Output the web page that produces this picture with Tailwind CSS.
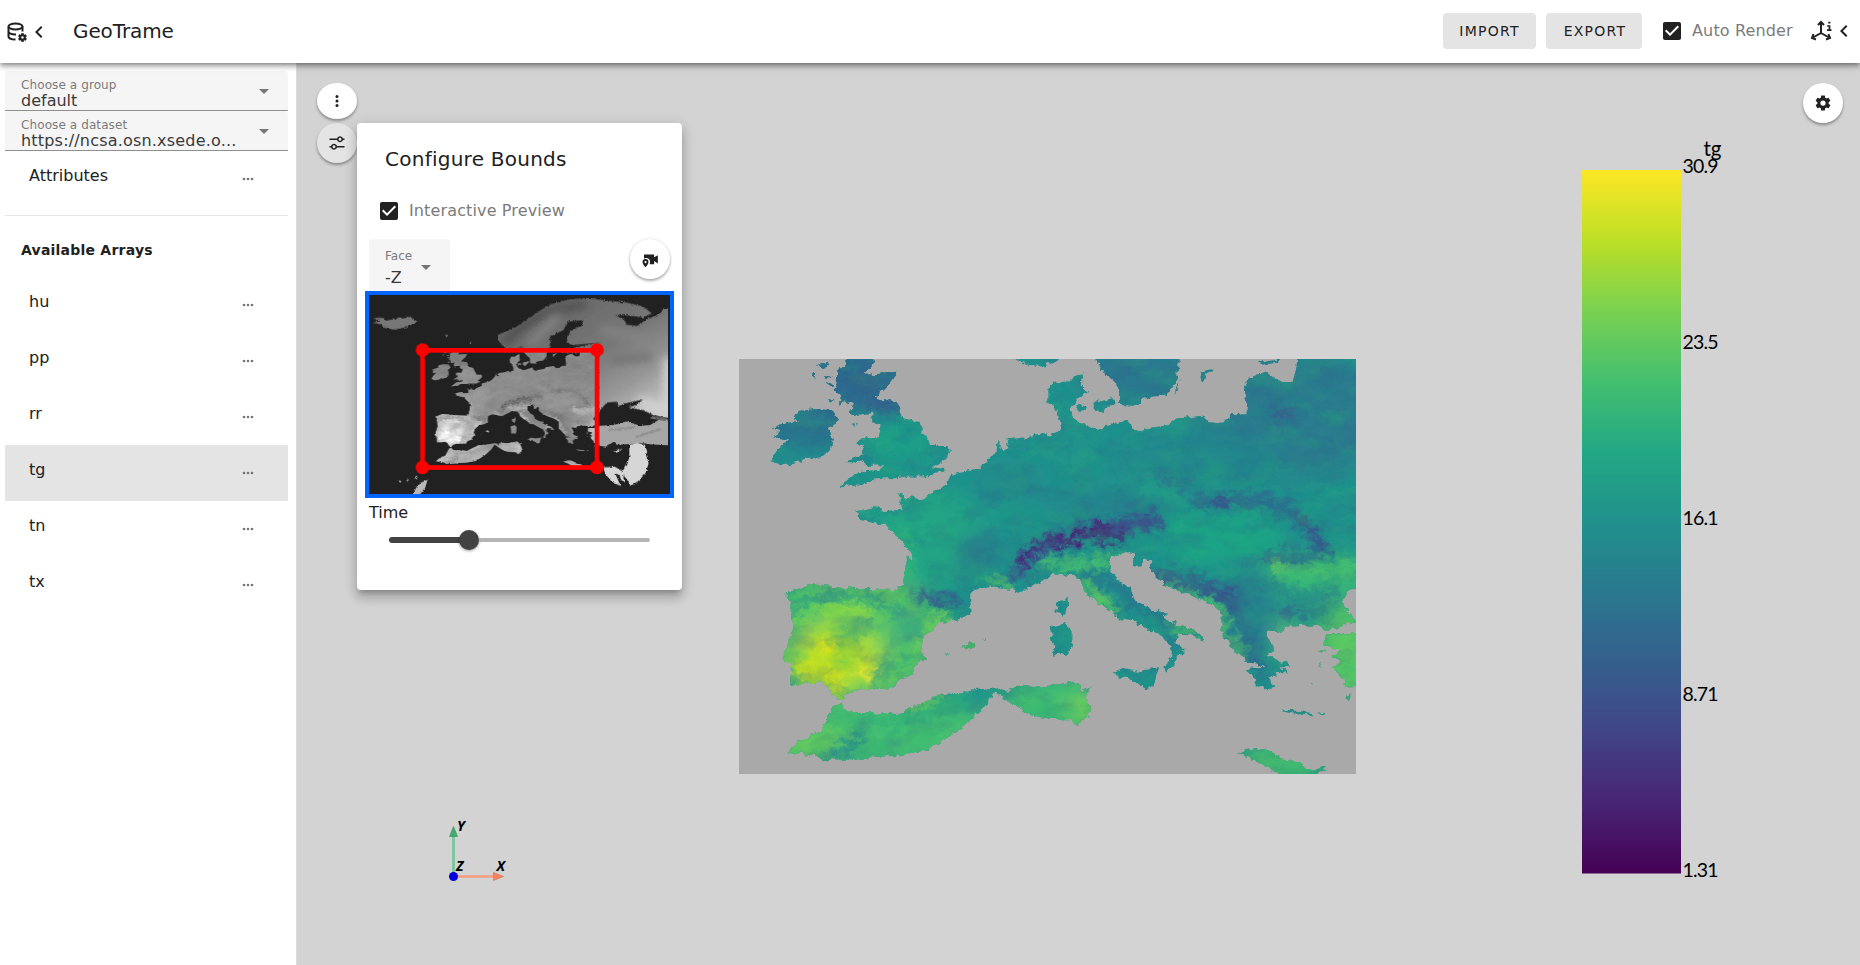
<!DOCTYPE html>
<html lang="en">
<head>
<meta charset="utf-8">
<title>GeoTrame</title>
<script src="https://cdn.jsdelivr.net/npm/@tailwindcss/browser@4"></script>
</head>
<body class="h-[965px] w-[1860px] overflow-hidden bg-white fill-[#212121] font-['DejaVu_Sans',sans-serif] text-[#212121]">
<svg class="absolute size-0" aria-hidden="true">
  <defs>
    <symbol id="cog" viewBox="0 0 24 24"><path d="M12,15.5A3.5,3.5 0 0,1 8.5,12A3.5,3.5 0 0,1 12,8.5A3.5,3.5 0 0,1 15.5,12A3.5,3.5 0 0,1 12,15.5M19.43,12.97C19.47,12.65 19.5,12.33 19.5,12C19.5,11.67 19.47,11.34 19.43,11L21.54,9.37C21.73,9.22 21.78,8.95 21.66,8.73L19.66,5.27C19.54,5.05 19.27,4.96 19.05,5.05L16.56,6.05C16.04,5.66 15.5,5.32 14.87,5.07L14.5,2.42C14.46,2.18 14.25,2 14,2H10C9.75,2 9.54,2.18 9.5,2.42L9.13,5.07C8.5,5.32 7.96,5.66 7.44,6.05L4.95,5.05C4.73,4.96 4.46,5.05 4.34,5.27L2.34,8.73C2.21,8.95 2.27,9.22 2.46,9.37L4.57,11C4.53,11.34 4.5,11.67 4.5,12C4.5,12.33 4.53,12.65 4.57,12.97L2.46,14.63C2.27,14.78 2.21,15.05 2.34,15.27L4.34,18.73C4.46,18.95 4.73,19.03 4.95,18.95L7.44,17.94C7.96,18.34 8.5,18.68 9.13,18.93L9.5,21.58C9.54,21.82 9.75,22 10,22H14C14.25,22 14.46,21.82 14.5,21.58L14.87,18.93C15.5,18.67 16.04,18.34 16.56,17.94L19.05,18.95C19.27,19.03 19.54,18.95 19.66,18.73L21.66,15.27C21.78,15.05 21.73,14.78 21.54,14.63L19.43,12.97Z"/></symbol>
    <symbol id="chev" viewBox="0 0 24 24"><path d="M15.41,16.58L10.83,12L15.41,7.41L14,6L8,12L14,18L15.41,16.58Z"/></symbol>
    <symbol id="check" viewBox="0 0 24 24"><path d="M10,17L5,12L6.41,10.58L10,14.17L17.59,6.58L19,8M19,3H5C3.89,3 3,3.89 3,5V19A2,2 0 0,0 5,21H19A2,2 0 0,0 21,19V5C21,3.89 20.1,3 19,3Z"/></symbol>
    <symbol id="down" viewBox="0 0 24 24"><path d="M7,10L12,15L17,10H7Z"/></symbol>
    <symbol id="dots" viewBox="0 0 12 4"><circle cx="2" cy="2" r="1.3"/><circle cx="6" cy="2" r="1.3"/><circle cx="10" cy="2" r="1.3"/></symbol>

    <filter id="rough" x="0" y="0" width="1905" height="1300" filterUnits="userSpaceOnUse">
      <feTurbulence type="fractalNoise" baseFrequency="0.05" numOctaves="3" seed="4"/>
      <feDisplacementMap in="SourceGraphic" scale="22" xChannelSelector="R" yChannelSelector="G"/>
    </filter>
    <filter id="b6" x="-50%" y="-50%" width="200%" height="200%"><feGaussianBlur stdDeviation="6"/></filter>
    <filter id="b12" x="-50%" y="-50%" width="200%" height="200%"><feGaussianBlur stdDeviation="13"/></filter>
    <filter id="b30" x="-80%" y="-80%" width="260%" height="260%"><feGaussianBlur stdDeviation="32"/></filter>
    <filter id="darkNoise" x="0" y="0" width="1905" height="1300" filterUnits="userSpaceOnUse" color-interpolation-filters="sRGB">
      <feTurbulence type="fractalNoise" baseFrequency="0.012 0.02" numOctaves="5" seed="11"/>
      <feColorMatrix values="0 0 0 0 .18  0 0 0 0 .36  0 0 0 0 .55  2.6 0 0 0 -1.15"/>
    </filter>
    <filter id="lightNoise" x="0" y="0" width="1905" height="1300" filterUnits="userSpaceOnUse" color-interpolation-filters="sRGB">
      <feTurbulence type="fractalNoise" baseFrequency="0.01 0.017" numOctaves="4" seed="27"/>
      <feColorMatrix values="0 0 0 0 .16  0 0 0 0 .70  0 0 0 0 .46  2.4 0 0 0 -1.1"/>
    </filter>
    <!-- fine relief that breaks up the mountain ranges -->
    <filter id="relief" x="0" y="0" width="1905" height="1300" filterUnits="userSpaceOnUse" color-interpolation-filters="sRGB">
      <feTurbulence type="fractalNoise" baseFrequency="0.035 0.05" numOctaves="3" seed="9" result="n"/>
      <feDisplacementMap in="SourceGraphic" in2="n" scale="70" xChannelSelector="R" yChannelSelector="G"/>
    </filter>
    <filter id="gray" x="0" y="0" width="1905" height="1300" filterUnits="userSpaceOnUse" color-interpolation-filters="sRGB">
      <feColorMatrix values=".38 .55 0 0 .2  .38 .55 0 0 .2  .38 .55 0 0 .2  0 0 0 1 0"/>
    </filter>
    <filter id="roughMini" x="0" y="0" width="1020" height="700" filterUnits="userSpaceOnUse">
      <feTurbulence type="fractalNoise" baseFrequency="0.12" numOctaves="3" seed="4"/>
      <feDisplacementMap in="SourceGraphic" scale="9" xChannelSelector="R" yChannelSelector="G"/>
    </filter>
    <linearGradient id="north" gradientUnits="userSpaceOnUse" x1="640" y1="60" x2="860" y2="420">
      <stop offset="0" stop-color="#686868"/><stop offset=".45" stop-color="#787878"/><stop offset=".75" stop-color="#989898"/><stop offset="1" stop-color="#c4c4c4"/>
    </linearGradient>
    <clipPath id="dataEdge"><path d="M57,45H954V642H57Z"/></clipPath>
    <clipPath id="northLand"><path id="northShape" d="M745,215L745,400 755,385 770,368 800,365 805,378 825,370 880,358 860,375 835,382 880,390 910,405 955,414H980V85L940,85 930,102 890,118 860,138 830,134 822,118 795,105 830,106 880,112 905,100 880,80 830,68 770,62 720,55 660,58 600,74 560,98 500,140 443,165 443,180 465,205 500,208 515,198 521,220H590L600,200 600,170 640,150 655,125 700,120 695,135 660,155 650,185 665,195 755,188 690,200 650,207 630,218Z"/></clipPath>

    <clipPath id="land">
      <!-- continent -->
      <path d="M1900,10V714H1878L1855,720 1850,735 1835,755 1855,775 1860,795 1878,812H1900V818H1878L1850,820 1825,838 1775,840 1765,827 1710,827 1665,833 1655,852 1630,842 1615,845 1610,860 1625,880 1630,900 1612,915 1630,925 1670,940 1678,955 1650,950 1675,968 1635,965 1640,980 1615,980 1630,1015 1610,1018 1595,1005 1575,1012 1570,980 1548,962 1570,950 1606,948 1580,940 1545,938 1540,920 1520,905 1500,880 1475,858 1475,785 1440,762 1400,742 1360,730 1310,705 1263,668 1263,637 1240,628 1230,650 1213,645 1205,622 1215,608 1192,603 1170,612 1140,625 1140,655 1170,698 1205,715 1220,755 1265,780 1315,788 1300,800 1330,818 1390,838 1420,865 1415,877 1390,855 1350,850 1335,880 1360,898 1360,915 1338,920 1330,945 1308,963 1298,952 1320,930 1326,905 1315,880 1300,862 1265,845 1205,810 1165,805 1140,780 1100,755 1065,730 1050,690 1020,675 975,670 945,690 900,710 870,727 820,715 770,706 725,725 720,745 725,785 690,808 630,820 580,865 570,900 588,928 560,945 545,975 505,990 490,1015 390,1018 350,1030 335,1048 305,1035 295,1010 270,996 230,1003 180,1002 187,940 168,938 155,925 170,895 190,835 182,750 163,732 205,715 235,702 330,710 410,718 500,720 520,705 530,650 530,620 552,628 530,585 490,550 465,525 388,510 385,490 370,485 440,470 460,483 515,480 515,445 500,432 525,440 580,448 600,428 655,405 660,375 700,367 755,350 800,300 802,275 820,303 838,295 832,268 900,260 910,268 915,250 950,250 955,262 992,240 990,210 975,170 955,160 955,118 968,95 1010,95 1035,75 1058,70 1055,115 1075,125 1045,145 1018,182 1040,210 1095,238 1195,210 1205,235 1230,247 1250,235 1315,225 1350,205 1420,197 1440,218 1475,218 1510,193 1550,190 1552,150 1542,110 1565,78 1610,65 1650,95 1690,92 1700,50 1702,10Z"/>
      <!-- southern Sweden, Norway, Danish isles, Gotland -->
      <path d="M1098,10L1102,40 1125,70 1170,110 1170,165 1230,168 1230,148 1310,133 1340,90 1348,10ZM835,10L868,36 905,47 940,46 985,30 1000,10ZM1034,166L1070,165 1076,184 1040,178ZM1094,155L1148,142 1155,160 1128,178 1122,192 1094,182ZM1410,72L1450,54 1415,98ZM1356,90L1334,132 1340,112ZM1584,38L1665,20 1640,38 1590,44Z"/>
      <!-- Great Britain -->
      <path d="M350,10L440,30 398,75 500,68 480,100 435,143 500,155 512,185 520,205 565,215 580,245 595,270 600,285 655,285 660,308 635,335 610,352 645,357 630,368 600,378 525,380 490,385 430,385 405,402 360,405 342,412 330,410 375,375 405,363 445,360 460,345 420,348 395,335 352,337 400,310 398,288 378,283 388,265 445,265 455,225 430,220 425,205 430,188 370,195 358,185 372,160 345,145 330,165 332,140 310,120 320,100 322,62 345,45Z"/>
      <!-- Ireland, Hebrides -->
      <path d="M190,203L210,183 250,178 305,180 325,210 295,235 305,265 300,300 285,315 220,330 165,345 120,335 132,315 150,290 175,268 132,262 150,240 128,233 150,224 205,212ZM265,45L298,32 290,48 272,58ZM246,68L256,70 252,86ZM280,74L308,82 300,88ZM290,96L312,104 300,112ZM292,152L316,148 304,158ZM330,140L365,150 350,166ZM372,222L380,218 378,228Z"/>
      <!-- Corsica, Sardinia, Sicily, Balearics -->
      <path d="M1012,735L1014,765 1008,790 995,800 980,785 977,758 1000,752ZM960,835L985,828 1005,820 1025,840 1023,890 1015,912 985,908 970,915 968,870ZM1155,965L1180,955 1230,963 1288,952 1275,985 1270,1015 1250,1015 1215,995 1158,975ZM697,888L718,876 737,890 722,900ZM758,870L768,868 766,873ZM645,914L653,914 649,920Z"/>
      <!-- North Africa -->
      <path d="M172,1205L205,1175 270,1145 310,1070 335,1060 345,1080 370,1090 440,1088 500,1095 560,1065 620,1035 700,1025 795,1012 830,1022 875,1008 930,1012 1030,995 1050,1008 1052,1022 1085,1008 1065,1028 1085,1080 1075,1100 1040,1130 1020,1108 960,1106 900,1095 850,1065 793,1026 760,1075 700,1130 650,1165 590,1200 500,1217 420,1222 345,1230 280,1232 260,1217ZM1520,1210L1545,1202 1570,1195 1600,1195 1632,1210 1650,1228 1710,1238 1728,1255 1785,1260 1740,1285H1670L1610,1250 1565,1225ZM1730,1262L1785,1252 1750,1290H1700Z"/>
      <!-- Anatolia, Crete, Aegean -->
      <path d="M1900,850H1785L1780,885 1808,893 1830,897 1805,920 1830,935 1810,950 1825,975 1845,990 1840,1000 1875,1015H1900ZM1656,1078L1720,1085 1750,1090 1745,1096 1710,1094 1658,1084ZM1762,1092L1780,1088 1775,1094ZM1848,1040L1865,1034 1852,1050ZM1765,900L1788,903 1775,910ZM1768,938L1775,940 1770,950ZM1740,1000L1745,1000 1743,1008Z"/>
    </clipPath>

    <g id="terrain" filter="url(#rough)">
      <g clip-path="url(#land)">
        <rect width="1905" height="1300" fill="#20928c"/>
        <!-- broad temperature zones -->
        <g filter="url(#b30)">
          <ellipse cx="400" cy="80" rx="200" ry="110" fill="#2e6a8e"/>
          <ellipse cx="240" cy="230" rx="130" ry="70" fill="#2b708e"/>
          <ellipse cx="200" cy="320" rx="100" ry="40" fill="#238a8d"/>
          <ellipse cx="520" cy="280" rx="90" ry="70" fill="#1fa088"/>
          <ellipse cx="1220" cy="70" rx="180" ry="90" fill="#2a788e"/>
          <ellipse cx="1690" cy="190" rx="300" ry="190" fill="#297b8e"/>
          <ellipse cx="1400" cy="330" rx="260" ry="80" fill="#23888d"/>
          <ellipse cx="600" cy="570" rx="180" ry="140" fill="#22a585"/>
          <ellipse cx="1480" cy="560" rx="190" ry="90" fill="#1fa386"/>
          <ellipse cx="1270" cy="400" rx="80" ry="25" fill="#24a884"/>
          <ellipse cx="1120" cy="470" rx="160" ry="40" fill="#26808e"/>
          <ellipse cx="840" cy="400" rx="90" ry="40" fill="#25858d"/>
          <ellipse cx="740" cy="610" rx="60" ry="55" fill="#2b758e"/>
          <ellipse cx="1760" cy="680" rx="200" ry="65" fill="#38b977"/>
          <ellipse cx="370" cy="860" rx="260" ry="200" fill="#5ec962"/>
          <ellipse cx="320" cy="920" rx="130" ry="100" fill="#b5de2b"/>
          <ellipse cx="540" cy="840" rx="60" ry="40" fill="#2aa186"/>
          <ellipse cx="720" cy="890" rx="100" ry="35" fill="#6ccd5a"/>
          <ellipse cx="500" cy="1150" rx="400" ry="90" fill="#44bf70"/>
          <ellipse cx="240" cy="1180" rx="120" ry="60" fill="#65cb5e"/>
          <ellipse cx="990" cy="1060" rx="190" ry="80" fill="#42be71"/>
          <ellipse cx="1060" cy="1085" rx="50" ry="50" fill="#73d056"/>
          <ellipse cx="1850" cy="930" rx="100" ry="110" fill="#5ac864"/>
          <ellipse cx="1650" cy="1240" rx="150" ry="50" fill="#4ec36b"/>
          <ellipse cx="1640" cy="850" rx="60" ry="60" fill="#58c765"/>
          <ellipse cx="1560" cy="800" rx="90" ry="160" fill="#277f8e"/>
          <ellipse cx="1840" cy="810" rx="80" ry="45" fill="#5ac864"/>
        </g>
        <g filter="url(#relief)">
        <!-- warm lowlands -->
        <g filter="url(#b12)" fill="none" stroke-linecap="round" stroke-linejoin="round">
          <path d="M950,640L1000,650 1100,640 1160,630" stroke="#46c06f" stroke-width="38"/>
          <path d="M1065,700L1150,780" stroke="#5ec962" stroke-width="34"/>
          <path d="M1310,820L1400,855" stroke="#5ec962" stroke-width="24"/>
          <path d="M1270,670L1470,780 1480,850 1545,920" stroke="#60ca60" stroke-width="20"/>
          <path d="M780,690L830,700" stroke="#65cb5e" stroke-width="22"/>
          <path d="M590,810L650,790 560,900" stroke="#6ccd5a" stroke-width="24"/>
          <path d="M300,780L400,790" stroke="#86d549" stroke-width="50"/>
          <path d="M520,550L535,690" stroke="#35b779" stroke-width="26"/>
          <path d="M1640,650L1860,660" stroke="#44bf70" stroke-width="50"/>
          <path d="M390,465L410,500" stroke="#35b779" stroke-width="20"/>
          <ellipse cx="410" cy="965" rx="34" ry="14" fill="#fde725"/>
          <ellipse cx="295" cy="895" rx="30" ry="18" fill="#e2e418"/>
          <ellipse cx="240" cy="955" rx="45" ry="30" fill="#c2df23"/>
          <ellipse cx="310" cy="990" rx="30" ry="40" fill="#cde11d"/>
          <path d="M540,1075L640,1045" stroke="#7ad151" stroke-width="24"/>
          <ellipse cx="1642" cy="640" rx="20" ry="14" fill="#8fd744"/>
        </g>
        <!-- mountain ranges -->
        <g filter="url(#b12)" fill="none" stroke-linecap="round" stroke-linejoin="round">
          <path d="M870,670L890,620 940,585 1050,550 1170,530 1280,515" stroke="#3d4d8a" stroke-width="44"/>
          <path d="M1400,455L1500,450 1600,450 1690,490 1760,560 1785,605 1740,620 1620,625" stroke="#2f6c8e" stroke-width="38"/>
          <path d="M1280,670L1400,700 1500,730 1530,800" stroke="#355f8d" stroke-width="38"/>
          <path d="M550,735L690,755" stroke="#31688e" stroke-width="24"/>
          <path d="M1060,675L1150,695 1190,745 1290,800 1330,890" stroke="#287c8e" stroke-width="30"/>
          <path d="M1660,790L1780,785" stroke="#33638d" stroke-width="22"/>
          <path d="M1530,800L1570,900 1600,980" stroke="#2f6b8e" stroke-width="26"/>
          <path d="M1620,700L1720,740 1820,735" stroke="#287d8e" stroke-width="16"/>
          <path d="M190,790L240,740 400,735 510,790" stroke="#27978a" stroke-width="20"/>
          <path d="M320,865L430,820" stroke="#26a086" stroke-width="12"/>
          <path d="M430,1005L470,950 550,920" stroke="#28a483" stroke-width="14"/>
          <path d="M300,1225L350,1190 400,1160" stroke="#21908d" stroke-width="26"/>
          <path d="M390,1100L500,1130 700,1040" stroke="#2fb07c" stroke-width="22"/>
          <path d="M380,100L450,95M420,160L510,175" stroke="#3a538b" stroke-width="20"/>
          <path d="M1640,195L1690,192" stroke="#3a568c" stroke-width="22"/>
          <path d="M1180,455L1250,480M1270,380L1380,410" stroke="#30698e" stroke-width="16"/>
          <path d="M1000,755V780M1010,850V880" stroke="#21918c" stroke-width="20"/>
          <path d="M1180,975L1265,970" stroke="#25858e" stroke-width="20"/>
        </g>
        <!-- highest ridges -->
        <g filter="url(#b6)" fill="none" stroke="#482475" stroke-linecap="round" stroke-linejoin="round">
          <path d="M880,655L895,625M900,605L950,570 1000,565 1050,575M980,588L1070,550 1190,550M1030,555L1130,525M1100,580L1180,565" stroke-width="13"/>
          <path d="M1440,455L1500,455M1700,500L1760,560 1780,600M1430,725L1500,735" stroke="#3c4f8a" stroke-width="12"/>
          <path d="M580,745L680,758" stroke="#3a548c" stroke-width="9"/>
        </g>
        </g>
        <rect width="1905" height="1300" filter="url(#darkNoise)" opacity=".24"/>
        <rect width="1905" height="1300" filter="url(#lightNoise)" opacity=".32"/>
      </g>
    </g>
  </defs>
</svg>

<div class="flex h-full flex-col">
  <header class="z-20 flex h-[63px] shrink-0 items-center bg-white pb-[10px] pl-[5px] shadow-[0_2px_4px_-1px_rgba(0,0,0,.3),0_4px_5px_0_rgba(0,0,0,.2),0_1px_10px_0_rgba(0,0,0,.14)]">
    <svg class="mt-[11px] size-6" viewBox="0 0 24 24" fill="none" stroke="#212121" stroke-width="2">
      <ellipse cx="10.5" cy="6.500" rx="7" ry="3"/><path d="M3.500,6.500V16.500C3.500,18 6,19.500 10.500,19.500M17.500,6.500V11.500M3.500,11.500C3.500,13 6,14.500 11,14.400"/>
      <use href="#cog" x="12.500" y="12.500" width="10" height="10" fill="#212121" stroke="#212121" stroke-width="1.200"/>
    </svg>
    <svg class="-ml-[2px] mt-[10px] size-6"><use href="#chev"/></svg>
    <h1 class="ml-[22px] mt-[9px] text-xl tracking-[-.1px]">GeoTrame</h1>
    <div class="ml-auto flex items-center pt-[9px]">
      <button class="h-9 w-[93px] rounded bg-[#e4e4e4] text-sm tracking-[1.25px]">IMPORT</button>
      <button class="ml-[10px] h-9 w-24 rounded bg-[#e4e4e4] pl-[2px] text-sm tracking-[1.25px]">EXPORT</button>
      <svg class="ml-[18px] size-6"><use href="#check"/></svg>
      <span class="ml-2 w-[116px] text-base tracking-[.15px] text-[#7b7b7b]">Auto Render</span>
      <svg class="ml-px size-6" viewBox="0 0 24 24" fill="none" stroke="#212121" stroke-width="2">
        <path d="M12,4V14L4,18.500M12,14L20,18.500M9,6L12,3 15,6M4.500,15L3,19 7,20.500M19.500,15L21,19 17,20.500"/>
        <path d="M18.200,7H20.500V11M18,11.200H22.500M19.200,3.700H21.400" stroke-width="1.700"/>
      </svg>
      <svg class="-ml-px mr-[4px] size-6"><use href="#chev"/></svg>
    </div>
  </header>

  <div class="flex min-h-0 flex-1">
    <aside class="w-[297px] shrink-0 border-r border-[#dcdcdc] bg-white pl-[5px] pr-2 pt-2">
      <div class="flex h-10 items-center justify-between rounded-t border-b border-[#8f8f8f] bg-[#f5f5f5] pl-4 pr-3">
        <div class="pt-[4px]"><div class="h-[15px] text-xs leading-[16px] tracking-[.1px] text-[#7b7b7b]">Choose a group</div><div class="text-base leading-[17px] text-[#3a3a3a]">default</div></div>
        <svg class="size-6 fill-[#757575]"><use href="#down"/></svg>
      </div>
      <div class="flex h-10 items-center justify-between rounded-t border-b border-[#8f8f8f] bg-[#f5f5f5] pl-4 pr-3">
        <div class="pt-[4px]"><div class="h-[15px] text-xs leading-[16px] tracking-[.1px] text-[#7b7b7b]">Choose a dataset</div><div class="text-base leading-[17px] tracking-[.19px] text-[#3a3a3a]">https://ncsa.osn.xsede.o...</div></div>
        <svg class="size-6 fill-[#757575]"><use href="#down"/></svg>
      </div>
      <div class="flex h-14 items-center justify-between pl-6 pr-[34px]"><span class="mb-[7px]">Attributes</span><svg class="h-1 w-3 fill-[#757575]"><use href="#dots"/></svg></div>
      <div class="mt-2 h-px bg-[#e8e8e8]"></div>
      <div class="flex h-[61px] items-center pl-4 pt-[7px] text-sm font-bold tracking-[.22px]">Available Arrays</div>
      <div class="flex h-14 items-center justify-between pl-6 pr-[34px]"><span class="mb-[7px]">hu</span><svg class="h-1 w-3 fill-[#757575]"><use href="#dots"/></svg></div>
      <div class="flex h-14 items-center justify-between pl-6 pr-[34px]"><span class="mb-[7px]">pp</span><svg class="h-1 w-3 fill-[#757575]"><use href="#dots"/></svg></div>
      <div class="flex h-14 items-center justify-between pl-6 pr-[34px]"><span class="mb-[7px]">rr</span><svg class="h-1 w-3 fill-[#757575]"><use href="#dots"/></svg></div>
      <div class="flex h-14 items-center justify-between bg-[#e4e4e4] pl-6 pr-[34px]"><span class="mb-[7px]">tg</span><svg class="h-1 w-3 fill-[#757575]"><use href="#dots"/></svg></div>
      <div class="flex h-14 items-center justify-between pl-6 pr-[34px]"><span class="mb-[7px]">tn</span><svg class="h-1 w-3 fill-[#757575]"><use href="#dots"/></svg></div>
      <div class="flex h-14 items-center justify-between pl-6 pr-[34px]"><span class="mb-[7px]">tx</span><svg class="h-1 w-3 fill-[#757575]"><use href="#dots"/></svg></div>
    </aside>

    <main class="relative flex-1 bg-[#d3d3d3]">
      <!-- map view; origin of the view is (297, 63) -->
      <svg class="absolute left-[442px] top-[296px]" width="617" height="415" viewBox="27 27 1851 1245">
        <rect x="27" y="27" width="1851" height="1245" fill="#a9a9a9"/>
        <use href="#terrain"/>
      </svg>

      <!-- orientation axes -->
      <svg class="absolute left-[143px] top-[747px]" width="90" height="80" viewBox="440 810 90 80">
        <path d="M453.500,876V836" stroke="#6cc796" stroke-width="2.600"/>
        <path d="M453.500,826.500L457.500,836.500H449.500Z" fill="#3fae70" stroke="#36895b" stroke-width=".6"/>
        <path d="M454,876.500H494" stroke="#f49d7d" stroke-width="2.600"/>
        <path d="M503.500,876.500L493.500,872.500V880.500Z" fill="#fb825f" stroke="#c96e52" stroke-width=".6"/>
        <circle cx="453.500" cy="876.500" r="4.500" fill="#0000dc"/>
        <g class="font-['Open_Sans',sans-serif] font-bold italic" font-size="14" fill="#000">
          <text x="457" y="831">Y</text><text x="456" y="871">Z</text><text x="496.500" y="871">X</text>
        </g>
      </svg>

      <!-- scalar bar -->
      <svg class="absolute left-[1275px] top-[72px]" width="180" height="760" viewBox="1572 135 180 760">
        <defs><linearGradient id="viridis" x1="0" y1="0" x2="0" y2="1">
          <stop offset="0" stop-color="#fde725"/><stop offset=".1" stop-color="#bddf26"/><stop offset=".2" stop-color="#7ad151"/><stop offset=".3" stop-color="#44bf70"/><stop offset=".4" stop-color="#22a884"/><stop offset=".5" stop-color="#21918c"/><stop offset=".6" stop-color="#2a788e"/><stop offset=".7" stop-color="#355f8d"/><stop offset=".8" stop-color="#414487"/><stop offset=".9" stop-color="#482475"/><stop offset="1" stop-color="#440154"/>
        </linearGradient></defs>
        <rect x="1582" y="170" width="99" height="703.500" fill="url(#viridis)"/>
        <g class="font-[Lato,sans-serif] tabular-nums [font-kerning:none]" font-size="19.500" fill="#000">
          <text x="1703.500" y="156" font-size="20.500" textLength="18">tg</text>
          <text x="1682.500" y="173" textLength="36">30.9</text>
          <text x="1682.500" y="349" textLength="36">23.5</text>
          <text x="1682.500" y="525" textLength="36">16.1</text>
          <text x="1682.500" y="701" textLength="36">8.71</text>
          <text x="1682.500" y="877" textLength="36">1.31</text>
        </g>
      </svg>

      <button class="absolute left-[20px] top-[20px] flex h-9 w-10 items-center justify-center rounded-[50%] bg-white shadow-[0_2px_3px_rgba(0,0,0,.35)]"><svg class="size-[18px]" viewBox="0 0 24 24"><circle cx="12" cy="6" r="2"/><circle cx="12" cy="12" r="2"/><circle cx="12" cy="18" r="2"/></svg></button>
      <button class="absolute left-[20px] top-[60px] flex size-10 items-center justify-center rounded-full bg-[#e4e4e4] shadow-[0_2px_3px_rgba(0,0,0,.35)]"><svg class="size-[18px]" viewBox="0 0 24 24"><path d="M8 13C6.140 13 4.590 14.280 4.140 16H2V18H4.140C4.590 19.720 6.140 21 8 21S11.410 19.720 11.860 18H22V16H11.860C11.410 14.280 9.860 13 8 13M8 19C6.900 19 6 18.100 6 17C6 15.900 6.900 15 8 15S10 15.900 10 17C10 18.100 9.100 19 8 19M19.860 6C19.410 4.280 17.860 3 16 3S12.590 4.280 12.140 6H2V8H12.140C12.590 9.720 14.140 11 16 11S19.410 9.720 19.860 8H22V6H19.860M16 9C14.900 9 14 8.100 14 7C14 5.900 14.900 5 16 5S18 5.900 18 7C18 8.100 17.100 9 16 9Z"/></svg></button>
      <button class="absolute right-[17px] top-[20px] flex size-10 items-center justify-center rounded-full bg-white shadow-[0_2px_3px_rgba(0,0,0,.35)]"><svg class="size-[18px]"><use href="#cog"/></svg></button>

      <!-- bounds panel -->
      <section class="absolute left-[60px] top-[60px] flex h-[467px] w-[325px] flex-col rounded bg-white px-2 shadow-[0_5px_5px_-3px_rgba(0,0,0,.2),0_8px_10px_1px_rgba(0,0,0,.14),0_3px_14px_2px_rgba(0,0,0,.12)]">
        <h2 class="mt-5 pl-5 text-xl leading-8 tracking-[.25px]">Configure Bounds</h2>
        <div class="mt-6 flex items-center pl-3"><svg class="size-6"><use href="#check"/></svg><span class="ml-2 text-base tracking-[.13px] text-[#7b7b7b]">Interactive Preview</span></div>
        <div class="mt-[16px] flex h-[52px] items-start justify-between pl-1 pr-1">
          <div class="flex h-[55px] w-[81px] items-start rounded-t bg-[#f5f5f5] pl-4">
            <div class="w-[29px] shrink-0 pt-[9px]"><div class="text-xs leading-[16px] text-[#7b7b7b]">Face</div><div class="mt-[2px] text-base leading-6 text-[#3a3a3a]">-Z</div></div>
            <svg class="mt-4 size-6 shrink-0 fill-[#757575]"><use href="#down"/></svg>
          </div>
          <button class="flex size-10 items-center justify-center rounded-full bg-white shadow-[0_2px_3px_rgba(0,0,0,.3),0_0_3px_rgba(0,0,0,.12)]"><svg class="size-[18px]" viewBox="0 0 24 24"><path fill-rule="evenodd" d="M4,6H17.500V9.800L22.500,7V18L17.500,14.800V19H11.500C12.300,17.300 12.300,14.500 11.200,12.800C9.500,10.400 5.800,10.200 4,11.500ZM6,12A4,4 0 0 0 2,16C2,19 6,23 6,23S10,19 10,16A4,4 0 0 0 6,12M6,14.500A1.500,1.500 0 1 1 6,17.500A1.500,1.500 0 1 1 6,14.500"/></svg></button>
        </div>
        <div class="relative h-[207px] w-[309px] shrink-0 border-4 border-[#0064ff] bg-[#212121]">
          <svg width="301" height="199" viewBox="57 45 903 597">
            <g clip-path="url(#dataEdge)">
            <g filter="url(#roughMini)">
              <g clip-path="url(#northLand)">
                <rect x="430" y="45" width="560" height="390" fill="url(#north)"/>
                <g filter="url(#b12)" fill="none" stroke-linecap="round">
                  <path d="M465,185L530,130 610,90 700,75" stroke="#4c4c4c" stroke-width="20"/>
                  <path d="M960,250V400L880,370" stroke="#d0d0d0" stroke-width="40"/>
                  <path d="M540,190L620,110M760,150L900,180" stroke="#868686" stroke-width="22"/>
                  <path d="M790,240L900,230" stroke="#6c6c6c" stroke-width="18"/>
                </g>
              </g>
              <path fill="#a6a6a6" d="M736,438L790,435 830,424 870,437 900,435 925,420 955,422H980V497L900,493 870,488 840,492 800,494 790,485 770,500 745,497 736,480Z"/>
              <path fill="none" stroke="#8a8a8a" stroke-width="8" stroke-linecap="round" opacity=".7" d="M780,450L850,442M860,470L930,448M905,412L955,420"/>
              <path fill="#d6d6d6" d="M838,493L862,488 884,494 892,515 888,525 896,550 886,580 865,603 842,618 832,600 822,588 830,560 838,530ZM760,562L795,560 818,575 826,555 833,560 820,590 824,608 814,600 806,582 796,582 812,618 785,605 766,582ZM790,513L818,507 800,518Z"/>
              <path fill="#777" d="M66,128L92,124 70,114 100,114 108,122 130,118 150,112 160,116 180,110 203,125 170,141 135,149 100,143 95,133Z"/>
              <path fill="#b8b8b8" d="M187,645L205,612 233,598 225,625 208,645ZM145,600L155,604 150,608ZM195,592L203,590 200,598ZM168,600L178,598 174,604Z"/>
              <path fill="#777" d="M285,165L295,165 290,172ZM358,188L365,184 362,194Z"/>
            </g>
            </g>
            <svg x="217" y="211" width="524" height="352" viewBox="27 27 1851 1245" preserveAspectRatio="none"><g filter="url(#gray)"><use href="#terrain"/></g></svg>
            <rect x="217.500" y="211" width="523.500" height="351.500" fill="none" stroke="#f00" stroke-width="14"/>
            <g fill="#f00"><circle cx="217.500" cy="210" r="20.500"/><circle cx="741" cy="210" r="20.500"/><circle cx="217.500" cy="562" r="20.500"/><circle cx="741" cy="562" r="20.500"/></g>
          </svg>
        </div>
        <div class="mt-[3px] pl-1 text-base leading-6">Time</div>
        <div class="mt-[5px] flex h-5 items-center pl-6 pr-6">
          <div class="h-[6px] w-[74px] rounded-l-full bg-[#424242]"></div>
          <div class="-ml-1 size-5 shrink-0 rounded-full bg-[#424242] shadow-[0_1px_3px_rgba(0,0,0,.4)]"></div>
          <div class="h-1 flex-1 rounded-r-full bg-[#b5b5b5]"></div>
        </div>
      </section>
    </main>
  </div>
</div>
</body>
</html>
